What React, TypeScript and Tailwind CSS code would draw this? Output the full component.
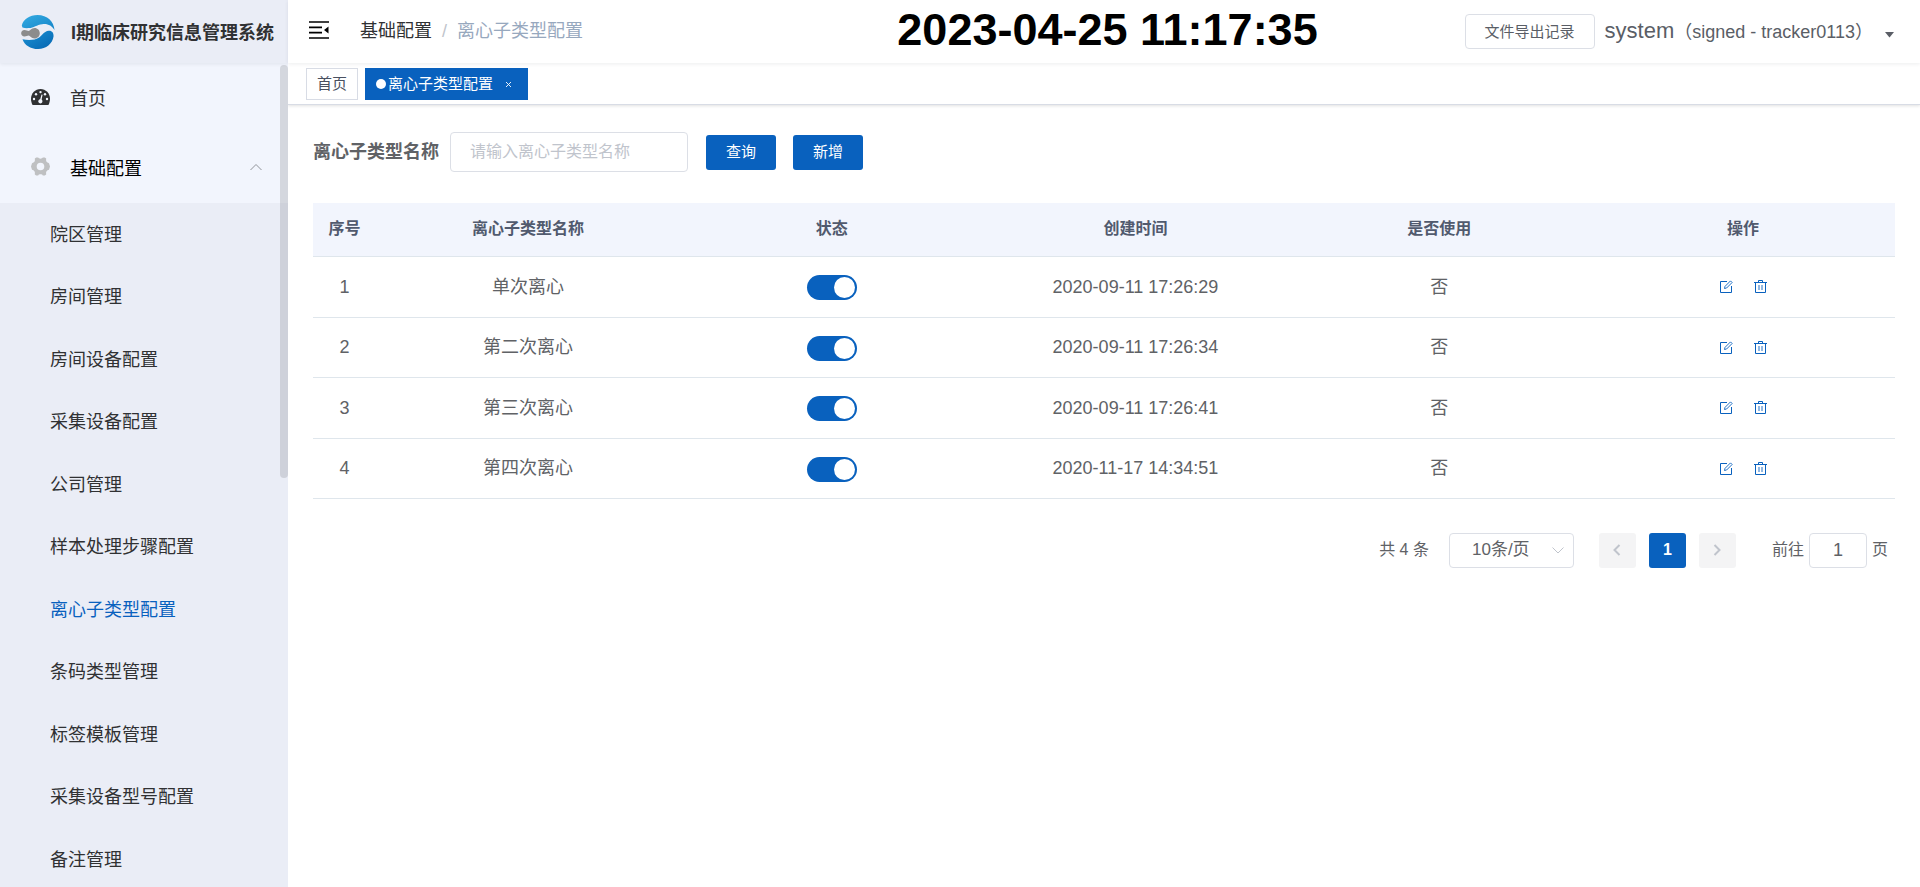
import { useState } from "react";

const subMenu = [
  "院区管理",
  "房间管理",
  "房间设备配置",
  "采集设备配置",
  "公司管理",
  "样本处理步骤配置",
  "离心子类型配置",
  "条码类型管理",
  "标签模板管理",
  "采集设备型号配置",
  "备注管理",
];

const initialRows = [
  { id: 1, name: "单次离心", enabled: true, created: "2020-09-11 17:26:29", used: "否" },
  { id: 2, name: "第二次离心", enabled: true, created: "2020-09-11 17:26:34", used: "否" },
  { id: 3, name: "第三次离心", enabled: true, created: "2020-09-11 17:26:41", used: "否" },
  { id: 4, name: "第四次离心", enabled: true, created: "2020-11-17 14:34:51", used: "否" },
];

function Logo() {
  return (
    <svg className="h-[34px] w-[34px] shrink-0" viewBox="18 26 103 104" aria-hidden="true">
      <defs>
        <linearGradient id="logoTop" x1="0" y1="0" x2="1" y2="1">
          <stop offset="0" stopColor="#35abe2" />
          <stop offset="1" stopColor="#1484c8" />
        </linearGradient>
        <linearGradient id="logoBottom" x1="0" y1="0" x2="1" y2="1">
          <stop offset="0" stopColor="#1c93d4" />
          <stop offset="1" stopColor="#0565b1" />
        </linearGradient>
      </defs>
      <path d="M20 58C24 40 44 26 68 26C98 26 118 46 120 72C112 58 98 51 82 54C66 56 56 65 42 66C34 67 28 66 22 64Z" fill="url(#logoTop)" />
      <path d="M22 100C38 104 60 104 74 94C84 86 88 76 102 74C112 73 118 80 117 92C114 114 94 130 70 130C46 130 28 118 22 100Z" fill="url(#logoBottom)" />
      <path d="M28 72C34 72 37 75 41 75C45 75 49 66 59 66C68 66 75 73 75 82C75 91 68 98 59 98C49 98 45 89 41 89C37 89 34 92 28 92C22 92 18 88 18 82C18 76 22 72 28 72Z" fill="#8c8c8c" />
    </svg>
  );
}

function GaugeIcon() {
  return (
    <svg className="mb-[3px] h-4 w-[19px]" viewBox="0 0 19 16" aria-hidden="true">
      <path d="M1.6 16C0.6 14.200 0 12 0 9.700C0 4.300 4.200 0 9.500 0S19 4.300 19 9.700C19 12 18.400 14.200 17.400 16Z" fill="#303133" />
      <g fill="#f2f5fd">
        <circle cx="3" cy="10" r="1.200" />
        <circle cx="5" cy="5.300" r="1.200" />
        <circle cx="9.500" cy="3.100" r="1.200" />
        <circle cx="14" cy="5.300" r="1.200" />
        <circle cx="16" cy="10" r="1.200" />
        <path d="M10.500 5.500L11.600 5.800L10.600 10.600A2.100 2.100 0 1 1 9.200 10.200Z" />
      </g>
    </svg>
  );
}

function GearIcon() {
  return (
    <svg className="mb-[3px] h-[19px] w-[19px]" viewBox="0 0 19 19" aria-hidden="true">
      <path
        d="M5.200 0.600L7.200 0.600C8 2 11 2 11.800 0.600L13.800 0.600L15.200 1.600C14.600 4.200 15.800 5.900 18 6.200L19 9.500L18 12.800C15.800 13.100 14.600 14.800 15.200 17.400L13.800 18.400L11.800 18.400C11 17 8 17 7.200 18.400L5.200 18.400L3.800 17.400C4.400 14.800 3.200 13.100 1 12.800L0 9.500L1 6.200C3.200 5.900 4.400 4.200 3.800 1.600ZM9.500 5.700A3.800 3.800 0 1 0 9.500 13.300A3.800 3.800 0 1 0 9.500 5.700Z"
        fill="#bfc0c2"
        fillRule="evenodd"
      />
    </svg>
  );
}

function FoldIcon() {
  return (
    <svg className="mb-1 h-[18px] w-5" viewBox="0 0 20 18" aria-hidden="true">
      <path d="M0 1H20M0 6.300H13M0 11.700H13M0 17H20" stroke="#000" strokeWidth="1.700" />
      <path d="M15 9L19.500 5.500V12.500Z" />
    </svg>
  );
}

function EditIcon() {
  return (
    <svg className="h-[13px] w-[13px]" viewBox="0 0 13 13" fill="none" stroke="#0961be" aria-hidden="true">
      <path d="M7 1.500H0.500V12.500H11.500V6" />
      <path d="M4.500 8.500L5 6.400L10.500 0.900L12.100 2.500L6.600 8Z" strokeWidth="0.900" />
    </svg>
  );
}

function TrashIcon() {
  return (
    <svg className="h-[13px] w-[13px]" viewBox="0 0 13 13" fill="none" stroke="#0961be" aria-hidden="true">
      <path d="M0 2.500H13M4.500 2.500V0.500H8.500V2.500M1.500 2.500V12.500H11.500V2.500" />
      <path d="M5 5V10M8 5V10" strokeWidth="0.900" />
    </svg>
  );
}

function Chevron({ d, className }: { d: string; className: string }) {
  return (
    <svg className={className} viewBox="0 0 12 12" fill="none" stroke="currentColor" aria-hidden="true">
      <path d={d} />
    </svg>
  );
}

function Sidebar() {
  return (
    <aside className="relative flex w-72 shrink-0 flex-col overflow-hidden bg-[#f2f5fd] text-[18px] text-[#303133]">
      <div className="z-10 flex h-[63px] shrink-0 items-center gap-4 bg-[#eaedf6] pl-[21px] shadow-[0_1px_4px_rgba(0,21,41,0.08)]">
        <Logo />
        <h1 className="pt-0.5 font-bold whitespace-nowrap">I期临床研究信息管理系统</h1>
      </div>
      <nav className="flex flex-col">
        <a href="#home" className="flex h-[70px] items-center gap-5 pl-[31px]">
          <GaugeIcon />
          <span className="pt-0.5">首页</span>
        </a>
        <button type="button" className="flex h-[70px] items-center gap-5 pr-[26px] pl-[31px] text-left text-black" aria-expanded="true">
          <GearIcon />
          <span className="grow pt-0.5">基础配置</span>
          <Chevron d="M0.500 9L6 3.500L11.500 9" className="mb-[3px] h-3 w-3 text-[#909399]" />
        </button>
        <ul className="bg-[#eaedf6]">
          {subMenu.map((item) => (
            <li key={item} className="odd:h-[63px] even:h-[62px]">
              <a
                href="#menu"
                className={
                  item === "离心子类型配置"
                    ? "flex h-full items-center pl-[50px] text-[#0961be]"
                    : "flex h-full items-center pl-[50px]"
                }
              >
                {item}
              </a>
            </li>
          ))}
        </ul>
      </nav>
      <div className="absolute top-[65px] right-0 h-[413px] w-2 rounded-full bg-[#909399]/30" />
    </aside>
  );
}

function Header() {
  return (
    <header className="z-10 flex h-[63px] shrink-0 items-center bg-white shadow-[0_1px_4px_rgba(0,21,41,0.08)]">
      <div className="flex flex-1 items-center pl-[21px] text-[18px]">
        <button type="button" aria-label="折叠菜单">
          <FoldIcon />
        </button>
        <nav className="flex gap-2.5 pb-0.5 pl-[31px] whitespace-nowrap">
          <a href="#config" className="text-[#303133]">基础配置</a>
          <span className="text-[#c0c4cc]">/</span>
          <span className="text-[#97a8be]">离心子类型配置</span>
        </nav>
      </div>
      <time className="pr-1 pb-1 pl-4 text-[45px] leading-none font-bold whitespace-nowrap text-black">2023-04-25 11:17:35</time>
      <div className="flex flex-1 items-center justify-end pr-[26px] whitespace-nowrap text-[#5a5e66]">
        <button type="button" className="h-[35px] rounded border border-[#dcdfe6] px-[19px] text-[15px]">
          文件导出记录
        </button>
        <button type="button" className="flex items-baseline pl-2.5">
          <span className="text-[22px]">system</span>
          <span className="text-[18px]">（signed - tracker0113）</span>
          <svg className="ml-3 h-[7px] w-[9px]" viewBox="0 0 9 7" aria-hidden="true">
            <path d="M0 1H9L4.500 6.500Z" fill="#5a5e66" />
          </svg>
        </button>
      </div>
    </header>
  );
}

function TagBar() {
  return (
    <div className="flex h-[42px] shrink-0 items-start gap-[7px] border-b border-[#d8dce5] bg-white pt-[5px] pl-[18px] text-[15px] shadow-[0_1px_3px_rgba(0,0,0,0.12)]">
      <a href="#home" className="flex h-8 items-center border border-[#d8dce5] px-2.5 text-[#495060]">
        首页
      </a>
      <span className="flex h-8 items-center bg-[#0961be] px-[11px] text-white">
        <i className="mr-0.5 h-2.5 w-2.5 rounded-full bg-white" />
        离心子类型配置
        <button type="button" aria-label="关闭" className="mr-[5px] ml-3">
          <svg className="h-[7px] w-[7px]" viewBox="0 0 7 7" stroke="#fff" strokeWidth="0.900" aria-hidden="true">
            <path d="M1 1L6 6M6 1L1 6" />
          </svg>
        </button>
      </span>
    </div>
  );
}

function SearchForm() {
  return (
    <form className="flex items-center" onSubmit={(e) => e.preventDefault()}>
      <label htmlFor="typeName" className="pr-[11px] text-[18px] font-bold text-[#606266]">
        离心子类型名称
      </label>
      <input
        id="typeName"
        type="text"
        placeholder="请输入离心子类型名称"
        className="h-10 w-[238px] rounded border border-[#dcdfe6] px-[19px] text-[16px] outline-none placeholder:text-[#c0c4cc]"
      />
      <button type="submit" className="ml-[18px] h-[35px] w-[70px] rounded-[3px] bg-[#0961be] text-[15px] text-white">
        查询
      </button>
      <button type="button" className="ml-[17px] h-[35px] w-[70px] rounded-[3px] bg-[#0961be] text-[15px] text-white">
        新增
      </button>
    </form>
  );
}

function TypeTable() {
  const [rows, setRows] = useState(initialRows);
  const toggle = (id: number) =>
    setRows(rows.map((r) => (r.id === id ? { ...r, enabled: !r.enabled } : r)));

  return (
    <table className="mt-[31px] w-full table-fixed text-center text-[18px] text-[#606266]">
      <thead>
        <tr className="h-[53px] border-b border-[#dfe6ec] bg-[#f2f5fd] text-[16px] text-[#515a6e]">
          <th className="w-[63px] font-bold">序号</th>
          <th className="font-bold">离心子类型名称</th>
          <th className="font-bold">状态</th>
          <th className="font-bold">创建时间</th>
          <th className="font-bold">是否使用</th>
          <th className="font-bold">操作</th>
        </tr>
      </thead>
      <tbody>
        {rows.map((row) => (
          <tr key={row.id} className="border-b border-[#dfe6ec] odd:h-[61px] even:h-[60px]">
            <td>{row.id}</td>
            <td>{row.name}</td>
            <td>
              <label className="mt-0.5 inline-flex h-[25px] w-[50px] cursor-pointer items-center rounded-full bg-[#c0ccda] px-0.5 align-middle has-checked:justify-end has-checked:bg-[#0961be]">
                <input
                  type="checkbox"
                  role="switch"
                  className="sr-only"
                  aria-label={row.name}
                  checked={row.enabled}
                  onChange={() => toggle(row.id)}
                />
                <span className="h-[21px] w-[21px] rounded-full bg-white" />
              </label>
            </td>
            <td>{row.created}</td>
            <td>{row.used}</td>
            <td>
              <div className="flex items-center justify-center gap-[21px]">
                <button type="button" aria-label="编辑">
                  <EditIcon />
                </button>
                <button type="button" aria-label="删除">
                  <TrashIcon />
                </button>
              </div>
            </td>
          </tr>
        ))}
      </tbody>
    </table>
  );
}

function Pagination() {
  return (
    <div className="mt-[34px] flex items-center justify-end pr-[7px] text-[16px] text-[#606266]">
      <span>共 4 条</span>
      <div className="relative ml-5">
        <select
          aria-label="每页条数"
          defaultValue="10"
          className="h-[35px] w-[125px] appearance-none rounded border border-[#dcdfe6] bg-white pl-[22px] text-[17px] outline-none"
        >
          <option value="10">10条/页</option>
          <option value="20">20条/页</option>
        </select>
        <Chevron d="M0.500 3.500L6 9L11.500 3.500" className="pointer-events-none absolute top-[11px] right-2.5 h-3 w-3 text-[#c0c4cc]" />
      </div>
      <div className="ml-[25px] flex gap-[13px]">
        <button type="button" disabled aria-label="上一页" className="flex h-[35px] w-[37px] items-center justify-center rounded-[3px] bg-[#f4f4f5] text-[#c0c4cc]">
          <Chevron d="M8.500 1L3.500 6L8.500 11" className="h-3 w-3 stroke-2" />
        </button>
        <button type="button" aria-current="page" className="h-[35px] w-[37px] rounded-[3px] bg-[#0961be] font-bold text-white">
          1
        </button>
        <button type="button" disabled aria-label="下一页" className="flex h-[35px] w-[37px] items-center justify-center rounded-[3px] bg-[#f4f4f5] text-[#c0c4cc]">
          <Chevron d="M3.500 1L8.500 6L3.500 11" className="h-3 w-3 stroke-2" />
        </button>
      </div>
      <label className="ml-9 flex items-center gap-[5px]">
        前往
        <input type="text" defaultValue="1" className="h-[35px] w-[58px] rounded border border-[#dcdfe6] text-center text-[18px] outline-none" />
        页
      </label>
    </div>
  );
}

export default function App() {
  return (
    <div className="flex h-screen overflow-hidden bg-white font-['Liberation_Sans','Noto_Sans_CJK_SC',sans-serif] leading-[26px]">
      <Sidebar />
      <div className="flex min-w-0 grow flex-col">
        <Header />
        <TagBar />
        <main className="px-[25px] pt-[27px]">
          <SearchForm />
          <TypeTable />
          <Pagination />
        </main>
      </div>
    </div>
  );
}
